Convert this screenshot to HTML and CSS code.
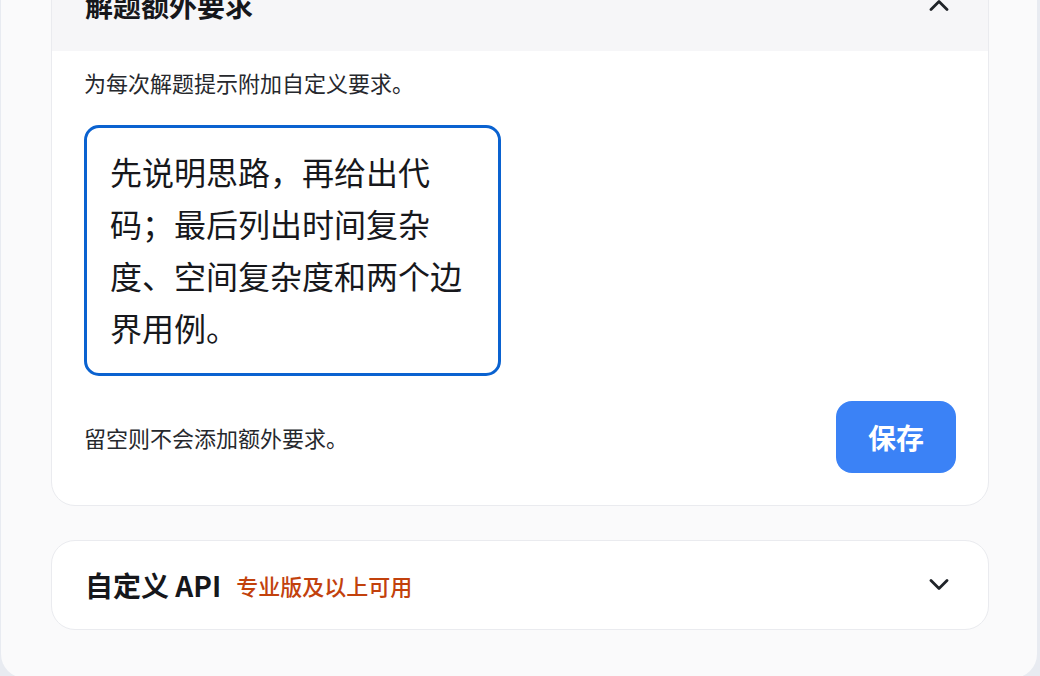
FILE: index.html
```html
<!DOCTYPE html>
<html lang="zh-CN">
<head>
<meta charset="utf-8">
<title>设置</title>
<link rel="stylesheet" href="styles.css">
</head>
<body>
<div class="panel">
  <section class="card">
    <div class="card-head head-open">
      <h2 class="card-title">解题额外要求</h2>
      <svg class="chev" width="20" height="12" viewBox="0 0 20 12"><path d="M2 10.5 L10 2.5 L18 10.5" fill="none" stroke="#1f2328" stroke-width="2.8" stroke-linecap="round" stroke-linejoin="round"/></svg>
    </div>
    <div class="card-body">
      <p class="hint">为每次解题提示附加自定义要求。</p>
      <textarea class="req">先说明思路，再给出代码；最后列出时间复杂度、空间复杂度和两个边界用例。</textarea>
      <div class="foot">
        <span class="hint">留空则不会添加额外要求。</span>
        <button class="save">保存</button>
      </div>
    </div>
  </section>
  <section class="card card-closed">
    <div class="card-head">
      <h2 class="card-title">自定义 API <span class="badge">专业版及以上可用</span></h2>
      <svg class="chev" width="20" height="12" viewBox="0 0 20 12"><path d="M2 1.5 L10 9.5 L18 1.5" fill="none" stroke="#1f2328" stroke-width="2.8" stroke-linecap="round" stroke-linejoin="round"/></svg>
    </div>
  </section>
</div>
</body>
</html>
```

FILE: styles.css
```css
html, body {
  margin: 0;
  padding: 0;
  overflow: hidden;
  background: #e8ebf1;
  font-family: "Noto Sans CJK SC", "Noto Sans", sans-serif;
  color: #1b1c20;
}

.panel {
  margin: -86px 0 0 1px;
  width: 1036px;
  box-sizing: border-box;
  padding: 48px 48px 48px 50px;
  background: #fafafb;
  border-radius: 24px;
}

.card {
  background: #fff;
  border: 1px solid #eaebef;
  border-radius: 24px;
  overflow: hidden;
}

.card-closed {
  margin-top: 34px;
}

.card-head {
  height: 88px;
  box-sizing: border-box;
  display: flex;
  align-items: center;
  justify-content: space-between;
  padding: 0 39px 0 33px;
}

.head-open {
  background: #f6f6f8;
  padding-bottom: 4px;
}

.card-title {
  margin: 0;
  font-size: 28px;
  font-weight: 700;
  color: #16171b;
  display: flex;
  align-items: center;
}

.badge {
  margin-left: 15px;
  font-size: 22px;
  font-weight: 500;
  color: #c2410c;
}

.chev {
  display: block;
}

.card-body {
  padding: 15px 32px 32px 32px;
}

.hint {
  margin: 0;
  font-size: 22px;
  line-height: 32px;
  color: #26282d;
}

.card-body > .hint {
  margin-bottom: 27px;
}

.req {
  display: block;
  box-sizing: border-box;
  width: 417px;
  height: 251px;
  border: 3px solid #0a62d0;
  border-radius: 15px;
  padding: 17px 23px 21px;
  font-family: "Noto Sans CJK SC", sans-serif;
  font-size: 32px;
  line-height: 52px;
  color: #17181c;
  resize: none;
  outline: none;
  overflow: hidden;
  background: #fff;
}

.foot {
  margin-top: 25px;
  display: flex;
  align-items: center;
  justify-content: space-between;
}

.save {
  width: 120px;
  height: 72px;
  border: none;
  border-radius: 16px;
  background: #3b82f6;
  color: #fff;
  font-family: "Noto Sans CJK SC", sans-serif;
  font-size: 28px;
  font-weight: 700;
  cursor: pointer;
}
```
